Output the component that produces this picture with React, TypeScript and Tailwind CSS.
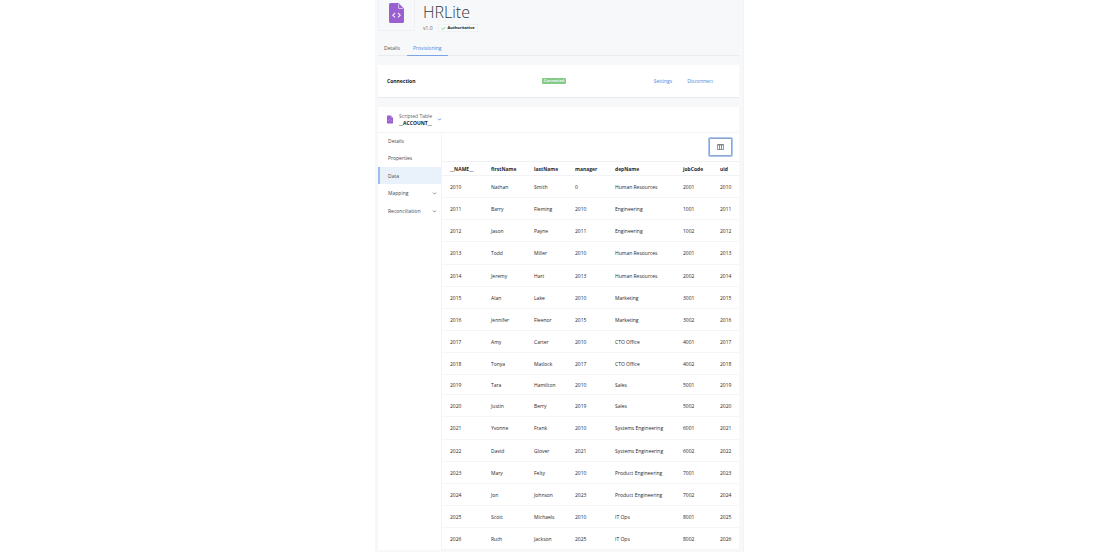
import { Check, ChevronDown } from "lucide-react";

const columns = ["__NAME__", "firstName", "lastName", "manager", "depName", "jobCode", "uid"];

const columnWidths = ["w-[41px]", "w-[43px]", "w-[41px]", "w-[40px]", "w-[68px]", "w-[37px]", ""];

const rows = [
  ["2010", "Nathan", "Smith", "0", "Human Resources", "2001", "2010"],
  ["2011", "Barry", "Fleming", "2010", "Engineering", "1001", "2011"],
  ["2012", "Jason", "Payne", "2011", "Engineering", "1002", "2012"],
  ["2013", "Todd", "Miller", "2010", "Human Resources", "2001", "2013"],
  ["2014", "Jeremy", "Hart", "2013", "Human Resources", "2002", "2014"],
  ["2015", "Alan", "Lake", "2010", "Marketing", "3001", "2015"],
  ["2016", "Jennifer", "Fleenor", "2015", "Marketing", "3002", "2016"],
  ["2017", "Amy", "Carter", "2010", "CTO Office", "4001", "2017"],
  ["2018", "Tonya", "Matlock", "2017", "CTO Office", "4002", "2018"],
  ["2019", "Tara", "Hamilton", "2010", "Sales", "5001", "2019"],
  ["2020", "Justin", "Berry", "2019", "Sales", "5002", "2020"],
  ["2021", "Yvonne", "Frank", "2010", "Systems Engineering", "6001", "2021"],
  ["2022", "David", "Glover", "2021", "Systems Engineering", "6002", "2022"],
  ["2023", "Mary", "Felty", "2010", "Product Engineering", "7001", "2023"],
  ["2024", "Jon", "Johnson", "2023", "Product Engineering", "7002", "2024"],
  ["2025", "Scott", "Michaels", "2010", "IT Ops", "8001", "2025"],
  ["2026", "Ruth", "Jackson", "2025", "IT Ops", "8002", "2026"],
];

function ScriptFileIcon({ className }: { className: string }) {
  return (
    <svg viewBox="0 0 15 20" className={className} aria-hidden="true">
      <path d="M1.5 0H9.5L15 5.5V18.5A1.5 1.5 0 0 1 13.5 20H1.5A1.5 1.5 0 0 1 0 18.5V1.5A1.5 1.5 0 0 1 1.5 0Z" fill="#9a5fd0" />
      <path d="M9.6 0.8V5.4H14.2" fill="none" stroke="#e9dcf6" strokeWidth="0.8" />
      <path d="M6 10L3.8 12.2L6 14.4M9 10L11.2 12.2L9 14.4" fill="none" stroke="#f3eafb" strokeWidth="1.1" />
    </svg>
  );
}

function ColumnsIcon() {
  return (
    <svg viewBox="0 0 7 6" className="h-[6px] w-[7px]" fill="none" stroke="#6b7681" strokeWidth="0.8" aria-hidden="true">
      <path d="M0.4 0.5H6.6V5.5H0.4ZM2.5 0.5V5.5M4.5 0.5V5.5" />
      <path d="M0.4 1H6.6" />
    </svg>
  );
}

function SideNav() {
  const link = "flex items-center justify-between border-l-2 pr-1 pl-2";
  return (
    <nav className="w-[64px] shrink-0 border-r border-[#f2f4f6] text-[#3f4a55]">
      <a href="#details" className={`${link} h-4 border-transparent`}>Details</a>
      <a href="#properties" className={`${link} h-[18px] border-transparent`}>Properties</a>
      <a href="#data" aria-current="page" className={`${link} h-[17px] border-[#9dbdec] bg-[#e9f2fb]`}>Data</a>
      <a href="#mapping" className={`${link} h-[18px] border-transparent`}>
        Mapping
        <ChevronDown className="size-[5px] text-[#6b7681]" strokeWidth={4} />
      </a>
      <a href="#reconciliation" className={`${link} h-[18px] border-transparent`}>
        Reconciliation
        <ChevronDown className="size-[5px] text-[#6b7681]" strokeWidth={4} />
      </a>
    </nav>
  );
}

function AccountTable() {
  return (
    <table className="w-full table-fixed border-collapse text-left text-[#1f262c]">
      <thead>
        <tr className="h-[14px] border-y border-[#f0f2f4]">
          {columns.map((name, i) => (
            <th key={name} scope="col" className={`${columnWidths[i]} p-0 pl-2 font-bold whitespace-nowrap`}>
              {name}
            </th>
          ))}
        </tr>
      </thead>
      <tbody>
        {rows.map((row) => (
          <tr
            key={row[0]}
            className={`border-b border-[#f4f5f7] ${row[0] === "2019" ? "h-[20px]" : "h-[22px] nth-[8n+4]:h-[23px]"}`}
          >
            {row.map((value, i) => (
              <td key={columns[i]} className="p-0 pl-2 whitespace-nowrap">{value}</td>
            ))}
          </tr>
        ))}
      </tbody>
    </table>
  );
}

export default function App() {
  return (
    <div className="min-h-screen bg-white font-['Open_Sans','Noto_Sans',sans-serif] text-[5px] leading-[8px]">
      <main className="mx-auto w-full max-w-[370px] pr-px">
        <div className="border-r border-[#f2f3f7] bg-[#f6f8fa] pr-1 pb-[2px] pl-[3px]">
          <header className="flex gap-2">
            <div className="flex h-[31px] w-[37px] items-start justify-center border border-t-0 border-[#eff1f4] pt-[3px]">
              <ScriptFileIcon className="h-5 w-[15px]" />
            </div>
            <div>
              <h1 className="text-[16px] leading-6 font-light text-[#30373d]">HRLite</h1>
              <div className="flex items-center gap-[5px]">
                <span className="text-[#5a646d]">v1.0</span>
                <span className="flex h-2 items-center gap-[2px] rounded-[1px] border border-[#eff1f3] bg-[#f9fafb] px-[2px] text-[4px] font-bold text-[#14191e]">
                  <Check className="size-[5px] text-[#6cc174]" strokeWidth={4} />
                  Authoritative
                </span>
              </div>
            </div>
          </header>

          <nav className="mt-[9px] flex h-[15px] gap-px border-b border-[#e9ebee] text-[#4c5760]">
            <a href="#overview" className="px-[6px] pt-[3px]">Details</a>
            <a href="#provisioning" aria-current="page" className="-mb-px border-b border-[#7ba5e6] px-[6px] pt-[3px] text-[#4f88e0]">
              Provisioning
            </a>
          </nav>

          <section className="mt-[9px] grid h-[33px] grid-cols-[155px_1fr_auto] items-center border-b border-[#e9ebee] bg-white pr-[26px] pl-[9px]">
            <h2 className="font-bold text-[#14191e]">Connection</h2>
            <span className="flex h-[6px] w-6 items-center justify-center rounded-[1px] bg-[#86ca89] text-[4px] leading-[6px] font-semibold text-white">
              Connected
            </span>
            <div className="flex gap-[15px] text-[#4a84e0]">
              <a href="#settings">Settings</a>
              <button type="button">Disconnect</button>
            </div>
          </section>

          <section className="mt-[9px] bg-white">
            <div className="flex h-[26px] items-center border-b border-[#f2f4f6] pl-[9px]">
              <ScriptFileIcon className="h-[9px] w-[6px]" />
              <button type="button" className="ml-[6px] flex items-center gap-[5px] text-left leading-[7px]">
                <span>
                  <span className="block text-[#59636d]">Scripted Table</span>
                  <span className="block font-bold text-[#14191e]">__ACCOUNT__</span>
                </span>
                <ChevronDown className="size-[5px] text-[#4681de]" strokeWidth={4} />
              </button>
            </div>
            <div className="flex">
              <SideNav />
              <div className="min-w-0 flex-1">
                <div className="flex h-[28px] items-center justify-end pr-[7px]">
                  <button
                    type="button"
                    aria-label="Choose columns"
                    className="flex h-[18px] w-[23px] items-center justify-center rounded-[1px] border border-[#8fa3cb] bg-white ring-1 ring-[#a9c6f1]"
                  >
                    <ColumnsIcon />
                  </button>
                </div>
                <AccountTable />
              </div>
            </div>
          </section>
        </div>
      </main>
    </div>
  );
}
